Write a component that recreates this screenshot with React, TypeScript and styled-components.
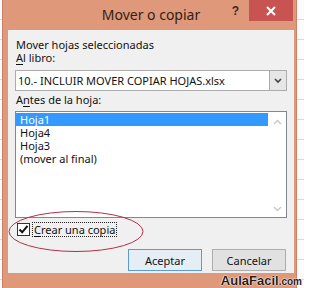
import React from "react";
import styled, { createGlobalStyle } from "styled-components";

const Global = createGlobalStyle`
  html, body { margin: 0; padding: 0; }
  body { width: 304px; height: 288px; overflow: hidden; background: #fff; }
`;

const UI_FONT = `"Noto Sans", "Open Sans", sans-serif`;

const Page = styled.div`
  position: relative;
  display: flex;
  width: 304px;
  height: 288px;
  overflow: hidden;
  background-color: #fbfbfb;
  background-image: repeating-linear-gradient(
    to bottom,
    transparent 0px,
    transparent 19px,
    #dadada 19px,
    #dadada 20px
  );
`;

const Edge = styled.div`
  flex: none;
  width: 2px;
`;

const Window = styled.div`
  flex: none;
  width: 295px;
  box-sizing: border-box;
  display: flex;
  flex-direction: column;
  background: #e0987a;
  border-left: 1px solid #c9826a;
  border-right: 1px solid #c9826a;
  padding: 0 2px 0 5px;
`;

const TitleBar = styled.div`
  position: relative;
  height: 30px;
  flex: none;
  display: flex;
  align-items: center;
  justify-content: center;
`;

const Title = styled.div`
  font-family: ${UI_FONT};
  font-size: 14px;
  color: #2e1f18;
  margin-top: -1px;
`;

const HelpButton = styled.div`
  position: absolute;
  top: 4px;
  right: 55px;
  font-family: "Liberation Sans", sans-serif;
  font-weight: bold;
  font-size: 12px;
  color: #3a2a22;
`;

const CloseButton = styled.div`
  position: absolute;
  top: 0;
  right: 1px;
  width: 44px;
  height: 21px;
  background: #c75450;
  display: flex;
  align-items: center;
  justify-content: center;
`;

const Panel = styled.div`
  position: relative;
  flex: none;
  height: 243px;
  box-sizing: border-box;
  background: #f0f0f0;
  padding: 8px 7px 0 7px;
  display: flex;
  flex-direction: column;
  font-family: ${UI_FONT};
  font-size: 11px;
  color: #111;
`;

const Label = styled.div<{ $gap?: number }>`
  line-height: 13px;
  height: 13px;
  padding-left: 1px;
  margin-top: ${(p) => p.$gap ?? 0}px;
  white-space: nowrap;
`;

const Key = styled.span`
  text-decoration: underline;
  text-underline-offset: 2px;
`;

const Combo = styled.div`
  margin-top: 6px;
  height: 21px;
  box-sizing: border-box;
  display: flex;
  align-items: stretch;
  background: #fff;
  border: 1px solid #acacac;
`;

const ComboText = styled.div`
  flex: 1;
  display: flex;
  align-items: center;
  padding-left: 2px;
  white-space: nowrap;
  overflow: hidden;
`;

const ComboButton = styled.div`
  flex: none;
  width: 16px;
  background: #e6e6e6;
  border-left: 1px solid #acacac;
  display: flex;
  align-items: center;
  justify-content: center;
`;

const ListBox = styled.div`
  margin-top: 5px;
  height: 107px;
  box-sizing: border-box;
  border: 1px solid #828790;
  background: #fff;
  display: flex;
`;

const Items = styled.div`
  flex: 1;
  padding-top: 1px;
`;

const Item = styled.div<{ $selected?: boolean }>`
  height: 13px;
  line-height: 13px;
  padding-left: 4px;
  white-space: nowrap;
  background: ${(p) => (p.$selected ? "#3399ff" : "transparent")};
  color: ${(p) => (p.$selected ? "#fff" : "#111")};
`;

const ScrollBar = styled.div`
  flex: none;
  width: 18px;
  display: flex;
  flex-direction: column;
  justify-content: space-between;
  align-items: center;
  padding: 7px 0 5px;
`;

const CheckRow = styled.div`
  margin-top: 4px;
  height: 15px;
  display: flex;
  align-items: center;
  padding-left: 2px;
  gap: 2px;
`;

const CheckBox = styled.div`
  width: 13px;
  height: 13px;
  box-sizing: border-box;
  border: 1px solid #333;
  background: #fff;
  display: flex;
  align-items: center;
  justify-content: center;
`;

const CheckLabel = styled.div`
  border: 1px dotted #222;
  padding: 0 1px;
  height: 15px;
  box-sizing: border-box;
  line-height: 13px;
  white-space: nowrap;
`;

const ButtonRow = styled.div`
  margin-top: 12px;
  display: flex;
  justify-content: flex-end;
  gap: 10px;
  padding-right: 1px;
`;

const Button = styled.div<{ $default?: boolean }>`
  width: 74px;
  height: 22px;
  box-sizing: border-box;
  display: flex;
  align-items: center;
  justify-content: center;
  background: ${(p) => (p.$default ? "#e5edf5" : "#e1e1e1")};
  border: 1px solid ${(p) => (p.$default ? "#5b9bd5" : "#adadad")};
`;

const Ellipse = styled.svg`
  position: absolute;
  left: 0;
  top: 180px;
  pointer-events: none;
`;

const Watermark = styled.div`
  position: absolute;
  right: 2px;
  bottom: -1px;
  line-height: 14px;
  font-family: "Liberation Sans", Arial, sans-serif;
  font-weight: bold;
  font-size: 13px;
  color: #2a1a12;
  text-shadow: 0 0 1px #fff, 0 0 1px #fff, 0 0 2px #fff;
  white-space: nowrap;
`;

const Small = styled.span`
  font-size: 10px;
`;

const items = ["Hoja1", "Hoja4", "Hoja3", "(mover al final)"];

export default function App() {
  return (
    <>
      <Global />
      <Page>
        <Edge />
        <Window>
          <TitleBar>
            <Title>Mover o copiar</Title>
            <HelpButton>?</HelpButton>
            <CloseButton>
              <svg width="10" height="10" viewBox="0 0 10 10">
                <path d="M1 1 L9 9 M9 1 L1 9" stroke="#fff" strokeWidth="2" />
              </svg>
            </CloseButton>
          </TitleBar>
          <Panel>
            <Label>Mover hojas seleccionadas</Label>
            <Label>
              <Key>A</Key>l libro:
            </Label>
            <Combo>
              <ComboText>10.- INCLUIR MOVER COPIAR HOJAS.xlsx</ComboText>
              <ComboButton>
                <svg width="8" height="6" viewBox="0 0 8 6">
                  <path d="M1 1 L4 4 L7 1" stroke="#444" strokeWidth="1.6" fill="none" />
                </svg>
              </ComboButton>
            </Combo>
            <Label $gap={2}>
              A<Key>n</Key>tes de la hoja:
            </Label>
            <ListBox>
              <Items>
                {items.map((t, i) => (
                  <Item key={t} $selected={i === 0}>
                    {t}
                  </Item>
                ))}
              </Items>
              <ScrollBar>
                <svg width="9" height="6" viewBox="0 0 9 6">
                  <path d="M1 5 L4.5 1.5 L8 5" stroke="#c8c8c8" strokeWidth="1.4" fill="none" />
                </svg>
                <svg width="9" height="6" viewBox="0 0 9 6">
                  <path d="M1 1 L4.5 4.5 L8 1" stroke="#c8c8c8" strokeWidth="1.4" fill="none" />
                </svg>
              </ScrollBar>
            </ListBox>
            <CheckRow>
              <CheckBox>
                <svg width="11" height="11" viewBox="0 0 11 11">
                  <path d="M1.5 5.5 L4.2 8.3 L9.5 1.8" stroke="#111" strokeWidth="2" fill="none" />
                </svg>
              </CheckBox>
              <CheckLabel>
                <Key>C</Key>rear una copia
              </CheckLabel>
            </CheckRow>
            <ButtonRow>
              <Button $default>Aceptar</Button>
              <Button>Cancelar</Button>
            </ButtonRow>
            <Ellipse width="140" height="46" viewBox="0 0 140 46">
              <ellipse cx="68" cy="21.5" rx="67" ry="20" stroke="#b0304a" strokeWidth="1" fill="none" />
            </Ellipse>
          </Panel>
        </Window>
        <Watermark>
          AulaFacil<Small>.com</Small>
        </Watermark>
      </Page>
    </>
  );
}
